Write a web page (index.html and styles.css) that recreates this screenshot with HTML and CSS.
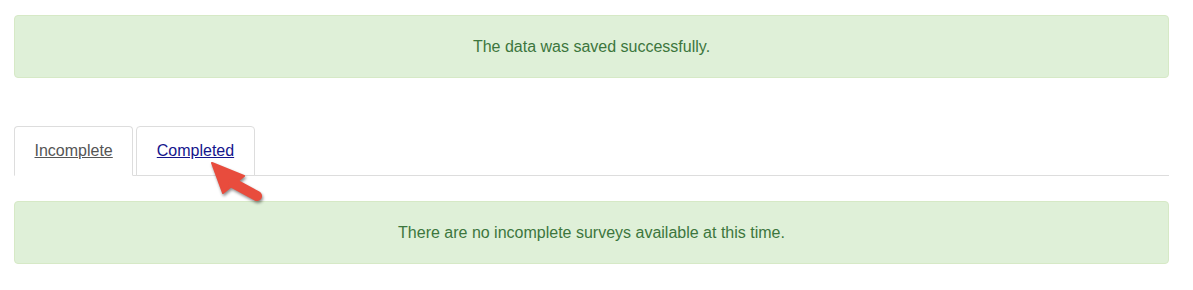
FILE: index.html
```html
<!DOCTYPE html>
<html lang="en">
<head>
<meta charset="utf-8">
<title>Surveys</title>
<link rel="stylesheet" href="styles.css">
</head>
<body>
<div class="page">
  <div class="alert">The data was saved successfully.</div>
  <div class="tabs-wrap">
    <ul class="tabs">
      <li class="tab active"><a href="#">Incomplete</a></li>
      <li class="tab"><a href="#" class="visited">Completed</a></li>
    </ul>
    <svg class="arrow" width="70" height="60" viewBox="0 0 70 60" aria-hidden="true">
      <g class="arrow-shape">
        <polygon points="7,8 39,21 18,38" fill="#e84c3d" stroke="#e84c3d" stroke-width="2" stroke-linejoin="round"/>
        <line x1="28" y1="28" x2="52" y2="41" stroke="#e84c3d" stroke-width="10" stroke-linecap="round"/>
      </g>
    </svg>
  </div>
  <div class="alert alert-second">There are no incomplete surveys available at this time.</div>
</div>
</body>
</html>
```

FILE: styles.css
```css
* { box-sizing: border-box; }
html, body { margin: 0; padding: 0; background: #ffffff; }
body {
  font-family: "Liberation Sans", Arial, sans-serif;
  font-size: 16px;
  color: #333333;
}
.page {
  padding: 15px 24px 0 14px;
}
.alert {
  background: #dff0d8;
  border: 1px solid #d6e9c6;
  border-radius: 4px;
  color: #3c763d;
  text-align: center;
  line-height: 23px;
  padding: 19px 15px;
  height: 63px;
}
.tabs-wrap {
  position: relative;
  margin-top: 48px;
}
.tabs {
  list-style: none;
  margin: 0;
  padding: 0;
  display: flex;
  border-bottom: 1px solid #dddddd;
}
.tab {
  margin: 0 3px -1px 0;
  border: 1px solid #dddddd;
  border-radius: 4px 4px 0 0;
  padding: 12px 19.5px;
  line-height: 24px;
  background: #ffffff;
}
.tab.active {
  border-bottom-color: #ffffff;
}
.tab a {
  color: #14148c;
  text-decoration: underline;
}
.tab.active a {
  color: #555555;
}
.arrow {
  position: absolute;
  left: 191px;
  top: 29px;
  overflow: visible;
}
.arrow-shape {
  filter: drop-shadow(1px 2px 1.5px rgba(0, 0, 0, 0.45));
}
.alert-second {
  margin-top: 25px;
}
```
